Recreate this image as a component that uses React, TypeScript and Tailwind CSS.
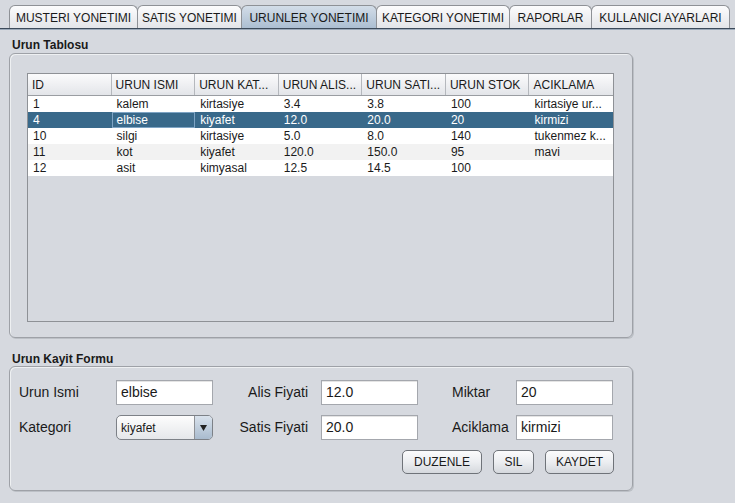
import React from 'react';

const TABS = [
  { label: 'MUSTERI YONETIMI', w: 'w-[129px]' },
  { label: 'SATIS YONETIMI', w: 'w-[105px]' },
  { label: 'URUNLER YONETIMI', w: 'w-[136px]' },
  { label: 'KATEGORI YONETIMI', w: 'w-[134px]' },
  { label: 'RAPORLAR', w: 'w-[83px]' },
  { label: 'KULLANICI AYARLARI', w: 'w-[139px]' },
];

const COLUMNS = ['ID', 'URUN ISMI', 'URUN KAT...', 'URUN ALIS...', 'URUN SATI...', 'URUN STOK', 'ACIKLAMA'];

const ROWS = [
  ['1', 'kalem', 'kirtasiye', '3.4', '3.8', '100', 'kirtasiye ur...'],
  ['4', 'elbise', 'kiyafet', '12.0', '20.0', '20', 'kirmizi'],
  ['10', 'silgi', 'kirtasiye', '5.0', '8.0', '140', 'tukenmez k...'],
  ['11', 'kot', 'kiyafet', '120.0', '150.0', '95', 'mavi'],
  ['12', 'asit', 'kimyasal', '12.5', '14.5', '100', ''],
];

const font = { fontFamily: '"Liberation Sans", Arial, sans-serif' };

function Field({ value, w = 'w-[97px]' }: { value: string; w?: string }) {
  return (
    <div className={`${w} h-[25px] bg-white border border-[#a4a7ad] shadow-[inset_0_1px_0_#e4e4e4] flex items-center px-[4px] text-[14px] text-[#1a1a1a]`}>
      {value}
    </div>
  );
}

function Btn({ label, w }: { label: string; w: string }) {
  return (
    <div className={`${w} h-[24px] rounded-[5px] border border-[#6f7379] bg-gradient-to-b from-[#fbfbfc] via-[#eceef1] to-[#d5d8dd] flex items-center justify-center text-[12px] text-[#1a1a1a]`}>
      {label}
    </div>
  );
}

export default function App() {
  return (
    <div className="w-[735px] h-[503px] bg-[#d6d9df] overflow-hidden text-[#1a1a1a]" style={font}>
      {/* tabs */}
      <div className="relative h-[30px] pt-[5px] pl-[9px]">
        <div className="flex">
          {TABS.map((t, i) => (
            <div
              key={t.label}
              className={`${t.w} h-[24px] -mr-px rounded-t-[6px] border border-b-0 border-[#8e9196] flex items-center justify-center text-[12px] ${
                i === 2
                  ? 'bg-gradient-to-b from-[#d3dde8] to-[#aabdd1]'
                  : 'bg-gradient-to-b from-[#fcfcfd] to-[#e2e4e8]'
              }`}
            >
              {t.label}
            </div>
          ))}
        </div>
        <div className="absolute left-0 right-0 bottom-0 h-[2px] bg-[#3c4a5a] border-b border-[#9aa8b8]" />
      </div>

      {/* table panel */}
      <div className="px-[9px] pt-[8px]">
        <div className="text-[12px] font-bold pl-[3px] h-[15px] leading-[15px]">Urun Tablosu</div>
        <div className="w-[624px] h-[285px] rounded-[6px] border border-[#9ea1a7] shadow-[inset_1px_1px_0_#eef0f2,1px_1px_0_#bcc0c6] px-[17px] pt-[19px] pb-[15px]">
          <div className="w-[587px] h-[249px] border border-[#8e9196] bg-[#d6d9df]">
            <div className="flex h-[22px] border-b border-[#9a9da2] bg-gradient-to-b from-[#fbfbfc] to-[#e3e5e9]">
              {COLUMNS.map((c, i) => (
                <div
                  key={c}
                  className={`w-[84px] px-[4px] flex items-center text-[12px] ${i < 6 ? 'border-r border-[#b5b8bd]' : ''}`}
                >
                  {c}
                </div>
              ))}
            </div>
            {ROWS.map((r, ri) => (
              <div
                key={ri}
                className={`flex h-[16px] ${
                  ri === 1 ? 'bg-[#39698a] text-white' : ri === 3 ? 'bg-[#f2f2f2]' : 'bg-white'
                }`}
              >
                {r.map((c, ci) => (
                  <div
                    key={ci}
                    className={`w-[84px] px-[5px] flex items-center text-[12px] leading-[16px] ${
                      ri === 1 && ci === 1 ? 'shadow-[inset_0_0_0_1px_#7ea4c4]' : ''
                    }`}
                  >
                    {c}
                  </div>
                ))}
              </div>
            ))}
          </div>
        </div>
      </div>

      {/* form panel */}
      <div className="px-[9px] pt-[14px]">
        <div className="text-[12px] font-bold pl-[3px] h-[14px] leading-[14px]">Urun Kayit Formu</div>
        <div className="w-[624px] h-[125px] rounded-[6px] border border-[#9ea1a7] shadow-[inset_1px_1px_0_#eef0f2,1px_1px_0_#bcc0c6] pl-[9px] pr-[18px] pt-[13px]">
          <div className="grid grid-cols-[97px_97px_108px_97px_34px_64px_97px] gap-y-[10px] items-center text-[14px]">
            <div>Urun Ismi</div>
            <Field value="elbise" />
            <div className="text-right pr-[13px]">Alis Fiyati</div>
            <Field value="12.0" />
            <div />
            <div>Miktar</div>
            <Field value="20" />

            <div>Kategori</div>
            <div className="w-[97px] h-[25px] rounded-[5px] border border-[#7d8187] bg-gradient-to-b from-[#fdfdfd] to-[#e5e7ea] flex items-center">
              <div className="flex-1 pl-[4px] text-[12px]">kiyafet</div>
              <div className="w-[18px] h-full border-l border-[#8e9196] rounded-r-[4px] bg-gradient-to-b from-[#d9e2ec] to-[#a9bbce] flex items-center justify-center">
                <svg width="7" height="6" viewBox="0 0 7 6">
                  <path d="M0 0h7L3.5 6z" fill="#222" />
                </svg>
              </div>
            </div>
            <div className="text-right pr-[13px]">Satis Fiyati</div>
            <Field value="20.0" />
            <div />
            <div>Aciklama</div>
            <Field value="kirmizi" />
          </div>
          <div className="flex justify-end gap-[11px] mt-[10px]">
            <Btn label="DUZENLE" w="w-[80px]" />
            <Btn label="SIL" w="w-[41px]" />
            <Btn label="KAYDET" w="w-[69px]" />
          </div>
        </div>
      </div>
    </div>
  );
}
